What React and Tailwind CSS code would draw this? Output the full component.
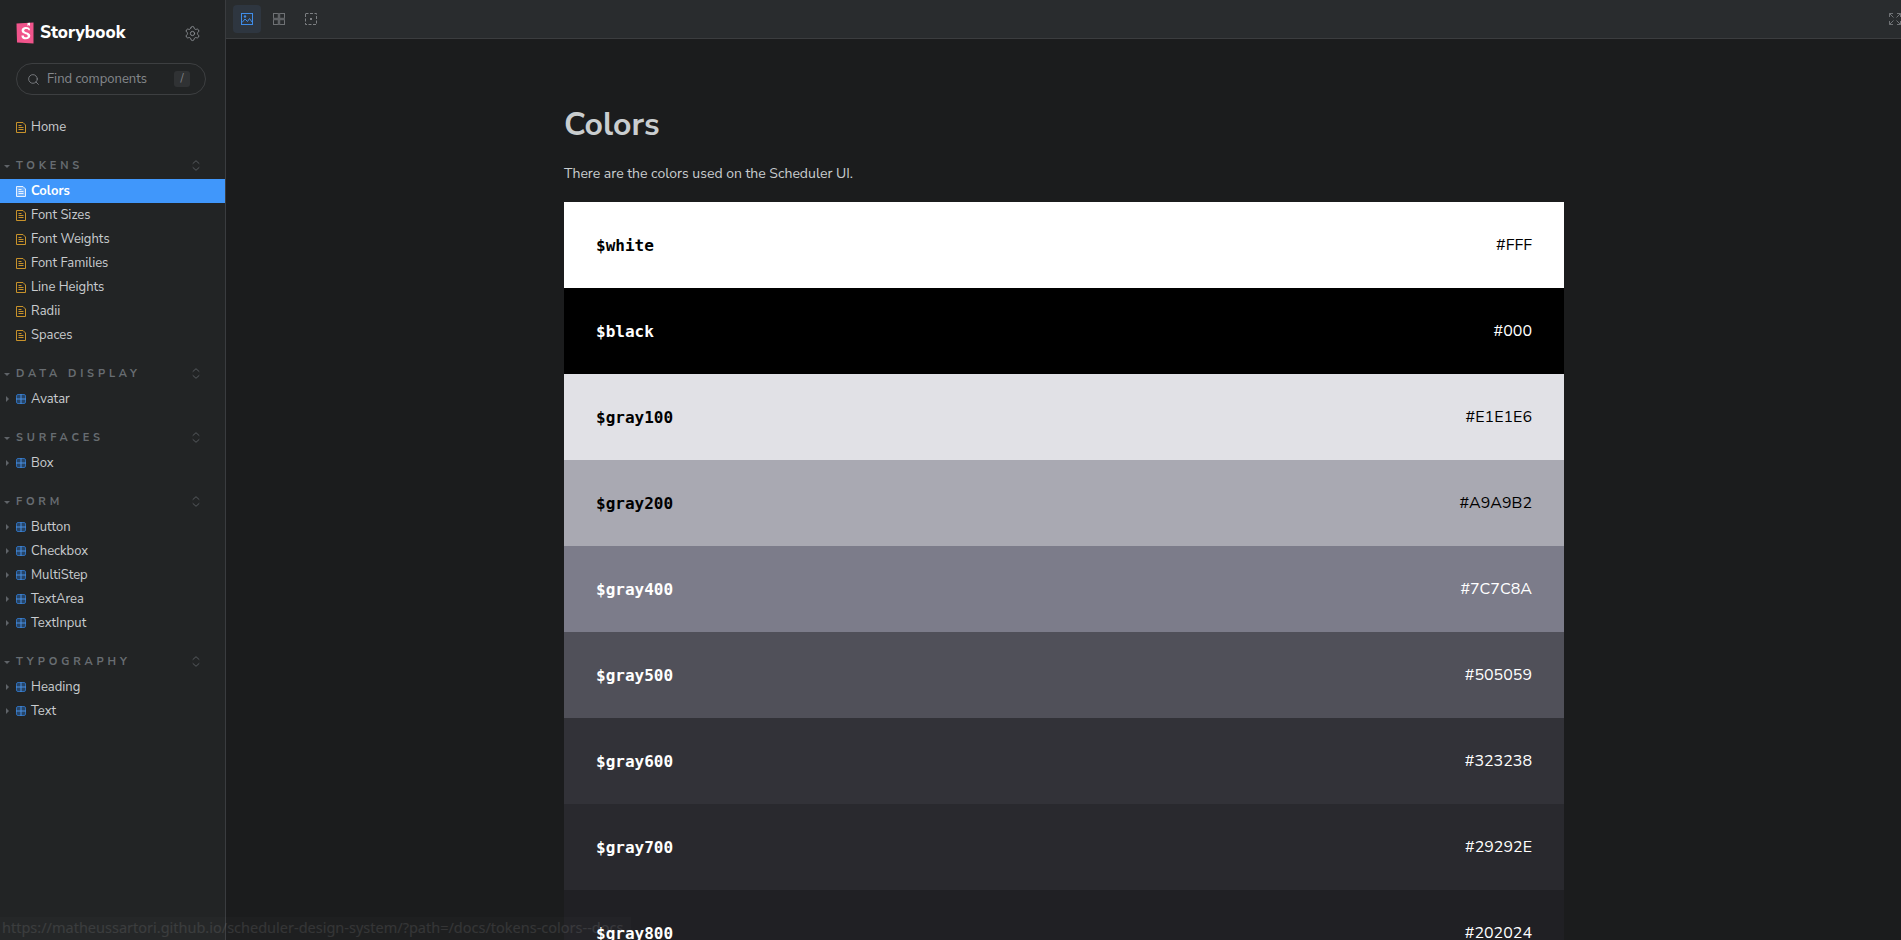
import React from "react";
import { Search, Settings } from "lucide-react";

const nunito = "font-['Nunito_Sans','Noto_Sans','Open_Sans',sans-serif]";

const rows = [
  { name: "$white", hex: "#FFF", bg: "bg-[#ffffff]", text: "text-black" },
  { name: "$black", hex: "#000", bg: "bg-[#000000]", text: "text-white" },
  { name: "$gray100", hex: "#E1E1E6", bg: "bg-[#e1e1e6]", text: "text-black" },
  { name: "$gray200", hex: "#A9A9B2", bg: "bg-[#a9a9b2]", text: "text-black" },
  { name: "$gray400", hex: "#7C7C8A", bg: "bg-[#7c7c8a]", text: "text-white" },
  { name: "$gray500", hex: "#505059", bg: "bg-[#505059]", text: "text-white" },
  { name: "$gray600", hex: "#323238", bg: "bg-[#323238]", text: "text-white" },
  { name: "$gray700", hex: "#29292E", bg: "bg-[#29292e]", text: "text-white" },
  { name: "$gray800", hex: "#202024", bg: "bg-[#202024]", text: "text-white" },
];

const sections = [
  {
    title: "TOKENS",
    docs: true,
    items: ["Colors", "Font Sizes", "Font Weights", "Font Families", "Line Heights", "Radii", "Spaces"],
  },
  { title: "DATA DISPLAY", items: ["Avatar"] },
  { title: "SURFACES", items: ["Box"] },
  { title: "FORM", items: ["Button", "Checkbox", "MultiStep", "TextArea", "TextInput"] },
  { title: "TYPOGRAPHY", items: ["Heading", "Text"] },
];

const DocIcon = ({ active }) => (
  <svg width="10" height="11" viewBox="0 0 10 11" fill="none" className={active ? "text-[#e6f1ff]" : "text-[#c8922a]"}>
    <path d="M0.500 0.500h6.500L9.500 3v7.500h-9z" stroke="currentColor" fill={active ? "#ffffff40" : "none"} />
    <path d="M2.500 3.500h3M2.500 5.500h5M2.500 7.500h5" stroke="currentColor" />
  </svg>
);

const ComponentIcon = () => (
  <svg width="10" height="10" viewBox="0 0 10 10" fill="none" className="text-[#2f6db5]">
    <rect x="0.500" y="0.500" width="9" height="9" rx="1.500" fill="currentColor" fillOpacity="0.45" stroke="currentColor" />
    <path d="M5 0v10M0 5h10" stroke="#4a90e2" />
  </svg>
);

const Updown = () => (
  <svg width="8" height="11" viewBox="0 0 8 11" fill="none" className="text-[#565a5e]">
    <path d="M0.700 3.700L4 0.700l3.300 3M0.700 7.300L4 10.300l3.300-3" stroke="currentColor" />
  </svg>
);

const Caret = ({ right }) =>
  right ? (
    <span className="w-0 h-0 border-y-[3.5px] border-y-transparent border-l-[3.5px] border-l-[#5f6368]" />
  ) : (
    <span className="w-0 h-0 border-x-[3.5px] border-x-transparent border-t-[3.5px] border-t-[#5f6368]" />
  );

const Item = ({ label, docs, active }) => (
  <div
    className={`flex items-center h-6 text-[13px] ${docs ? "pl-4" : "pl-[6px]"} ${
      active ? "bg-[#4097fb] text-white font-bold" : "text-[#c9cccf]"
    }`}
  >
    {!docs && (
      <span className="w-[10px] flex items-center">
        <Caret right />
      </span>
    )}
    {docs ? <DocIcon active={active} /> : <ComponentIcon />}
    <span className="ml-[5px] mt-[2px]">{label}</span>
  </div>
);

const Sidebar = () => (
  <aside className={`w-[226px] shrink-0 h-full bg-[#222425] border-r border-[#3a3c3f] ${nunito}`}>
    <div className="flex items-center justify-between pt-[21px] pl-4 pr-[24px]">
      <div className="flex items-center gap-[6px]">
        <svg width="18" height="22" viewBox="0 0 18 22">
          <path d="M0.500 1.500L17.500 0.500V21.500L1 20.500z" fill="#f0548b" />
          <path d="M14 0.700V4L12.700 3 11.500 4V1z" fill="#fff" />
          <path d="M12.500 8.200c0-.9-.9-1.300-2.200-1.300-1.400 0-2.200.6-2.200 1.500 0 2.300 6.200 1.400 6.200 5.400 0 2.300-2 3.500-4.400 3.500-2.600 0-4.600-1.200-4.500-3.900h2.500c0 1.400.8 1.900 2 1.900 1.200 0 1.900-.5 1.900-1.400 0-2.400-6.200-1.500-6.200-5.400 0-2.200 1.800-3.500 4.200-3.500 2.500 0 4.300 1.100 4.200 3.200z" fill="#fff" />
        </svg>
        <span className="text-[17.25px] leading-6 font-extrabold text-white">Storybook</span>
      </div>
      <Settings size={17} strokeWidth={1.3} className="text-[#8d9094]" />
    </div>

    <div className="mt-[18px] ml-4 w-[190px] h-8 rounded-full border border-[#3d3f41] flex items-center pl-[10px] pr-[15px] text-[13px] text-[#85888c]">
      <Search size={13} strokeWidth={1.5} />
      <span className="ml-[7px] mt-[2px] flex-1">Find components</span>
      <span className="w-4 h-4 rounded-[3px] bg-[#303234] text-[11px] flex items-center justify-center">/</span>
    </div>

    <div className="mt-5">
      <Item label="Home" docs />
    </div>

    {sections.map((s) => (
      <div key={s.title} className="mt-4">
        <div className="flex items-center h-[22px] pl-1 pr-[25px] text-[11px] font-bold tracking-[0.35em] text-[#686d72] whitespace-pre">
          <Caret />
          <span className="ml-[6px] flex-1">{s.title}</span>
          <span className="-mt-px">
            <Updown />
          </span>
        </div>
        <div className="mt-[2px]">
          {s.items.map((i) => (
            <Item key={i} label={i} docs={s.docs} active={i === "Colors"} />
          ))}
        </div>
      </div>
    ))}
  </aside>
);

const Toolbar = () => (
  <div className="h-[39px] shrink-0 bg-[#292c2e] border-b border-[#3b3d3f] flex items-center pl-[7px]">
    <div className="w-7 h-7 rounded bg-[#2e3640] flex items-center justify-center">
      <svg width="12" height="12" viewBox="0 0 12 12" fill="none" stroke="#3f8ce8">
        <rect x="0.500" y="0.500" width="11" height="11" />
        <circle cx="4" cy="3.500" r="1.200" fill="#3f8ce8" stroke="none" />
        <path d="M1 9.500L4 6l2.500 2.500L8.500 5.500 11 9" />
      </svg>
    </div>
    <div className="ml-1 w-7 h-7 flex items-center justify-center">
      <svg width="12" height="12" viewBox="0 0 12 12" fill="none" stroke="#6f7275">
        <rect x="0.500" y="0.500" width="11" height="11" />
        <path d="M6 0v12M0 6h12" strokeWidth="2.500" stroke="#5f6265" />
      </svg>
    </div>
    <div className="ml-1 w-7 h-7 flex items-center justify-center">
      <svg width="12" height="12" viewBox="0 0 12 12" fill="none" stroke="#7c7f82">
        <rect x="0.500" y="0.500" width="11" height="11" strokeDasharray="3 1.500" />
        <rect x="5" y="5" width="2" height="2" fill="#7c7f82" stroke="none" />
      </svg>
    </div>
    <div className="ml-auto w-3 flex items-center">
      <svg width="12" height="12" viewBox="0 0 12 12" fill="none" stroke="#6f7275" className="shrink-0">
        <path d="M0.500 4V0.500H4M0.500 0.500L4.500 4.500M8 0.500h3.500V4M11.500 0.500l-4 4M0.500 8v3.500H4M0.500 11.500l4-4M8 11.500h3.500V8M11.500 11.500l-4-4" />
      </svg>
    </div>
  </div>
);

export default function App() {
  return (
    <div className="relative flex h-screen overflow-hidden bg-[#1b1c1d]">
      <Sidebar />
      <main className="flex-1 min-w-0 flex flex-col">
        <Toolbar />
        <div className="flex-1 overflow-hidden pt-[68px] pl-[338px]">
          <div className="w-[1000px]">
            <h1 className={`text-[32px] leading-9 font-bold text-[#c9cdcf] ${nunito}`}>Colors</h1>
            <p className={`mt-[21px] text-[14px] leading-5 text-[#c9cdcf] ${nunito}`}>
              There are the colors used on the Scheduler UI.
            </p>
            <div className="mt-[18px]">
              {rows.map((r) => (
                <div key={r.name} className={`h-[86px] flex items-center justify-between px-8 ${r.bg} ${r.text}`}>
                  <span className="mt-[2px] font-['DejaVu_Sans_Mono',monospace] font-bold text-[16px]">{r.name}</span>
                  <span className={`text-[16px] ${nunito}`}>{r.hex}</span>
                </div>
              ))}
            </div>
          </div>
        </div>
      </main>

      {/* browser link preview, nearly invisible over the page */}
      <div className="absolute left-0 bottom-0 h-[23px] pl-[2px] pr-2 pb-px flex items-center bg-white/[0.015] text-[14.5px] text-white/10 font-['Noto_Sans',sans-serif] whitespace-nowrap">
        https://matheussartori.github.io/scheduler-design-system/?path=/docs/tokens-colors--docs
      </div>
    </div>
  );
}
